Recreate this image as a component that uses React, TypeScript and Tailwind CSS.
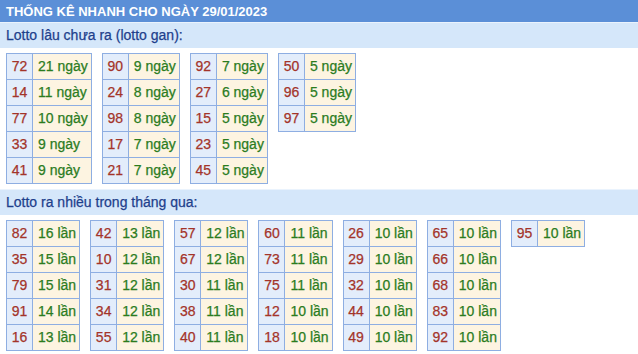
import { Fragment } from 'react';

type Entry = { num: string; count: string };

const ganTables: Entry[][] = [
  [
    { num: '72', count: '21 ngày' },
    { num: '14', count: '11 ngày' },
    { num: '77', count: '10 ngày' },
    { num: '33', count: '9 ngày' },
    { num: '41', count: '9 ngày' },
  ],
  [
    { num: '90', count: '9 ngày' },
    { num: '24', count: '8 ngày' },
    { num: '98', count: '8 ngày' },
    { num: '17', count: '7 ngày' },
    { num: '21', count: '7 ngày' },
  ],
  [
    { num: '92', count: '7 ngày' },
    { num: '27', count: '6 ngày' },
    { num: '15', count: '5 ngày' },
    { num: '23', count: '5 ngày' },
    { num: '45', count: '5 ngày' },
  ],
  [
    { num: '50', count: '5 ngày' },
    { num: '96', count: '5 ngày' },
    { num: '97', count: '5 ngày' },
  ],
];

const hotTables: Entry[][] = [
  [
    { num: '82', count: '16 lần' },
    { num: '35', count: '15 lần' },
    { num: '79', count: '15 lần' },
    { num: '91', count: '14 lần' },
    { num: '16', count: '13 lần' },
  ],
  [
    { num: '42', count: '13 lần' },
    { num: '10', count: '12 lần' },
    { num: '31', count: '12 lần' },
    { num: '34', count: '12 lần' },
    { num: '55', count: '12 lần' },
  ],
  [
    { num: '57', count: '12 lần' },
    { num: '67', count: '12 lần' },
    { num: '30', count: '11 lần' },
    { num: '38', count: '11 lần' },
    { num: '40', count: '11 lần' },
  ],
  [
    { num: '60', count: '11 lần' },
    { num: '73', count: '11 lần' },
    { num: '75', count: '11 lần' },
    { num: '12', count: '10 lần' },
    { num: '18', count: '10 lần' },
  ],
  [
    { num: '26', count: '10 lần' },
    { num: '29', count: '10 lần' },
    { num: '32', count: '10 lần' },
    { num: '44', count: '10 lần' },
    { num: '49', count: '10 lần' },
  ],
  [
    { num: '65', count: '10 lần' },
    { num: '66', count: '10 lần' },
    { num: '68', count: '10 lần' },
    { num: '83', count: '10 lần' },
    { num: '92', count: '10 lần' },
  ],
  [{ num: '95', count: '10 lần' }],
];

const LottoTable: React.FC<{ rows: Entry[] }> = ({ rows }) => {
  return (
    <div className="grid grid-cols-[26px_auto] border-l border-t border-[#8eaee2]">
      {rows.map((row, index) => (
        <Fragment key={index}>
          <div className="flex items-center justify-center h-[26px] border-r border-b border-[#8eaee2] bg-[#e3edfb] text-[#a3342a]">
            {row.num}
          </div>
          <div className="flex items-center justify-start h-[26px] pl-[5px] pr-[3px] border-r border-b border-[#8eaee2] bg-[#fdf4e1] text-[#2b7c1e] whitespace-nowrap">
            {row.count}
          </div>
        </Fragment>
      ))}
    </div>
  );
};

const SectionTitle: React.FC<{ title: string }> = ({ title }) => {
  return (
    <div className="flex items-center h-[26px] px-[6px] border-t border-[#eaf3fd] bg-[#d5e7fa] text-[14px] text-[#1e3f8c]">
      {title}
    </div>
  );
};

export default function App() {
  return (
    <div className="w-[638px] h-[354px] bg-white font-['Liberation_Sans',Arial,sans-serif] text-[14px] leading-[17px] [-webkit-text-stroke:0.25px] overflow-hidden">
      <div className="flex items-center h-[22px] px-[6px] bg-[#5b8fd7] text-white text-[13px] font-bold [-webkit-text-stroke:0px]">
        THỐNG KÊ NHANH CHO NGÀY 29/01/2023
      </div>

      <SectionTitle title="Lotto lâu chưa ra (lotto gan):" />
      <div className="flex flex-row items-start gap-[10px] px-[6px] my-[5px]">
        {ganTables.map((rows, index) => (
          <LottoTable key={index} rows={rows} />
        ))}
      </div>

      <SectionTitle title="Lotto ra nhiều trong tháng qua:" />
      <div className="flex flex-row items-start gap-[10px] px-[6px] my-[5px]">
        {hotTables.map((rows, index) => (
          <LottoTable key={index} rows={rows} />
        ))}
      </div>
    </div>
  );
}
